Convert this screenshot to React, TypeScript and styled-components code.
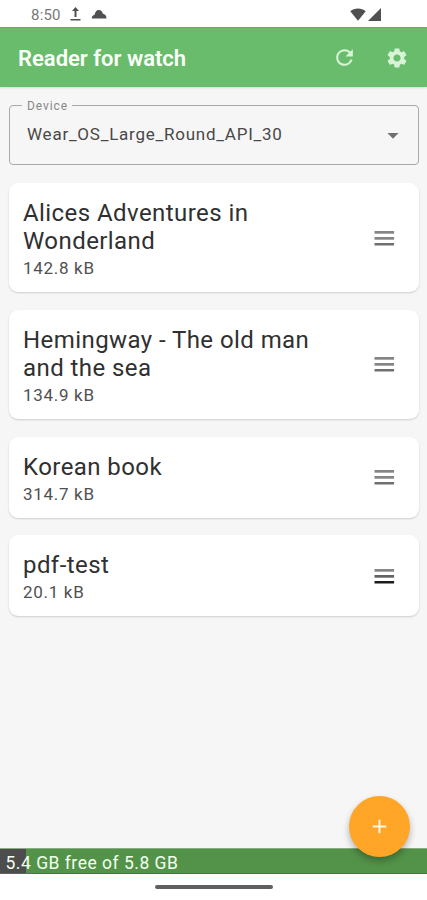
import React from "react";
import styled, { createGlobalStyle } from "styled-components";
import { MdAdd, MdRefresh, MdSettings } from "react-icons/md";

const GlobalStyle = createGlobalStyle`
  * { box-sizing: border-box; }
  body { margin: 0; background: #fff; font-family: Roboto, sans-serif; }
`;

const Screen = styled.div`
  display: flex;
  flex-direction: column;
  width: 427px;
  height: 900px;
  overflow: hidden;
  background: #f6f6f6;
`;

const StatusBar = styled.div`
  display: flex;
  align-items: center;
  height: 27px;
  flex: none;
  padding: 1px 46px 0 31px;
  background: #fff;
  color: #555;
`;

const Clock = styled.span`
  width: 39px;
  font-size: 15px;
  line-height: 18px;
  color: #777;
  letter-spacing: 0.2px;
  padding-top: 1px;
`;

const StatusIcon = styled.svg<{ $gap?: number }>`
  display: block;
  flex: none;
  fill: #505050;
  margin-left: ${({ $gap = 0 }) => $gap}px;
`;

const Spacer = styled.div`
  flex: 1;
`;

const AppBar = styled.header`
  display: flex;
  align-items: center;
  height: 60px;
  flex: none;
  padding: 0 18px;
  gap: 28px;
  background: #69bc6c;
  border-top: 1px solid #5bb45f;
  box-shadow: 0 1px 2px rgba(0, 0, 0, 0.12);
`;

const AppTitle = styled.h1`
  flex: 1;
  margin: 2px 0 0;
  font-size: 22px;
  font-weight: 600;
  line-height: 28px;
  letter-spacing: 0;
  color: #fbfff9;
`;

const BarButton = styled.button`
  display: flex;
  padding: 0;
  border: 0;
  background: none;
  color: #d9f3d7;
`;

const Content = styled.main`
  flex: 1;
  padding: 17px 8px 0 9px;
`;

const DeviceField = styled.fieldset`
  display: flex;
  align-items: center;
  height: 67px;
  margin: -6px 0 0;
  padding: 0 19px 0 16px;
  border: 1px solid #aaa;
  border-radius: 4px;
  min-width: 0;
`;

const DeviceLabel = styled.legend`
  padding: 2px 4px 0 5px;
  margin-left: -4px;
  font-size: 12px;
  line-height: 12px;
  height: 14px;
  letter-spacing: 0.9px;
  color: #888;
`;

const DeviceValue = styled.span`
  flex: 1;
  font-size: 17px;
  line-height: 20px;
  letter-spacing: 0.77px;
  color: #484848;
  margin: -8px 0 0 1px;
`;

const Caret = styled.svg`
  display: block;
  fill: #707070;
  margin-top: -5px;
`;

const BookList = styled.div`
  display: flex;
  flex-direction: column;
  gap: 17.8px;
  margin-top: 18px;
`;

const BookCard = styled.article<{ $height: number }>`
  display: flex;
  align-items: center;
  justify-content: space-between;
  height: ${({ $height }) => $height}px;
  padding: 0 24px 0 14px;
  border-radius: 9px;
  background: #fff;
  box-shadow: 0 1px 2px rgba(0, 0, 0, 0.17);
`;

const BookText = styled.div`
  width: 300px;
  padding-top: 5px;
`;

const BookTitle = styled.h2`
  margin: 0;
  font-size: 24px;
  font-weight: 400;
  line-height: 28px;
  letter-spacing: 0.43px;
  color: #303030;
`;

const BookSize = styled.div`
  font-size: 17px;
  line-height: 26px;
  letter-spacing: 0.7px;
  color: #505050;
`;

const Handle = styled.svg`
  display: block;
  flex: none;
  fill: #858585;
  margin-top: 1px;
`;

const Footer = styled.footer`
  position: relative;
  flex: none;
`;

const StorageBar = styled.div`
  display: flex;
  align-items: center;
  height: 26px;
  padding: 3px 0 0 5.5px;
  background: linear-gradient(90deg, #4d4d4d 26px, #539349 26px);
  border-top: 1px solid #89ac82;
  border-bottom: 1px solid #388526;
  font-size: 17.5px;
  line-height: 22px;
  letter-spacing: 0.5px;
  color: #f4fff0;
`;

const NavBar = styled.div`
  display: flex;
  justify-content: center;
  height: 26px;
  padding-top: 11px;
  background: #fff;
`;

const NavPill = styled.div`
  width: 118px;
  height: 4px;
  border-radius: 2px;
  background: #606060;
`;

/* The add button floats over the lower edge of the page and the storage bar. */
const AddButton = styled.button`
  position: absolute;
  right: 17px;
  top: -52px;
  display: flex;
  align-items: center;
  justify-content: center;
  width: 61px;
  height: 61px;
  padding: 0;
  border: 0;
  border-radius: 50%;
  background: #ffa628;
  color: #fff8e5;
  box-shadow: 0 4px 7px rgba(0, 0, 0, 0.28);
`;

interface Book {
  lines: string[];
  size: string;
  height: number;
}

const books: Book[] = [
  { lines: ["Alices Adventures in", "Wonderland"], size: "142.8 kB", height: 109 },
  { lines: ["Hemingway - The old man", "and the sea"], size: "134.9 kB", height: 109 },
  { lines: ["Korean book"], size: "314.7 kB", height: 81 },
  { lines: ["pdf-test"], size: "20.1 kB", height: 81 },
];

function DragHandle({ dark }: { dark: boolean }) {
  return (
    <Handle width="21" height="15" viewBox="0 0 21 15">
      <rect x="0.5" y="0" width="19.6" height="2.7" />
      <rect x="0.5" y="6" width="19.6" height="2.7" fill={dark ? "#626262" : undefined} />
      <rect x="0.5" y="12" width="19.6" height="2.5" fill={dark ? "#1c1c1c" : "#707070"} />
    </Handle>
  );
}

export default function App() {
  return (
    <>
      <GlobalStyle />
      <Screen>
        <StatusBar>
          <Clock>8:50</Clock>
          <StatusIcon width="11" height="14" viewBox="0 0 11 14">
            <path d="M5.5 0 9 4H6.5v6h-2V4H2ZM0.5 12h10v1.5H.5Z" />
          </StatusIcon>
          <StatusIcon $gap={10} width="16" height="10" viewBox="0 0 16 10">
            <path d="M0.8 9.5C0.7 7.2 2 6 3.6 5.7 4.2 2.8 5.6 1 7.8 1c2.1 0 3.6 1.5 4.1 3.7 2.2.2 3.7 2 3.6 4.8Z" />
          </StatusIcon>
          <Spacer />
          <StatusIcon width="16" height="13" viewBox="0 0 16 13">
            <path d="M0.3 3.2C4.5-.5 11.5-.5 15.7 3.2L8 12.8Z" />
          </StatusIcon>
          <StatusIcon $gap={2} width="13" height="13" viewBox="0 0 13 13">
            <path d="M13 0V13H0Z" />
          </StatusIcon>
        </StatusBar>
        <AppBar>
          <AppTitle>Reader for watch</AppTitle>
          <BarButton aria-label="Refresh">
            <MdRefresh size={25} />
          </BarButton>
          <BarButton aria-label="Settings">
            <MdSettings size={24} />
          </BarButton>
        </AppBar>
        <Content>
          <DeviceField>
            <DeviceLabel>Device</DeviceLabel>
            <DeviceValue>Wear_OS_Large_Round_API_30</DeviceValue>
            <Caret width="12" height="6" viewBox="0 0 12 6">
              <path d="M0.5 0H11.5L6 5.7Z" />
            </Caret>
          </DeviceField>
          <BookList>
            {books.map((book) => (
              <BookCard key={book.size} $height={book.height}>
                <BookText>
                  {book.lines.map((line) => (
                    <BookTitle key={line}>{line}</BookTitle>
                  ))}
                  <BookSize>{book.size}</BookSize>
                </BookText>
                <DragHandle dark={book.size === "20.1 kB"} />
              </BookCard>
            ))}
          </BookList>
        </Content>
        <Footer>
          <StorageBar>5.4 GB free of 5.8 GB</StorageBar>
          <NavBar>
            <NavPill />
          </NavBar>
          <AddButton aria-label="Add book">
            <MdAdd size={23} />
          </AddButton>
        </Footer>
      </Screen>
    </>
  );
}
